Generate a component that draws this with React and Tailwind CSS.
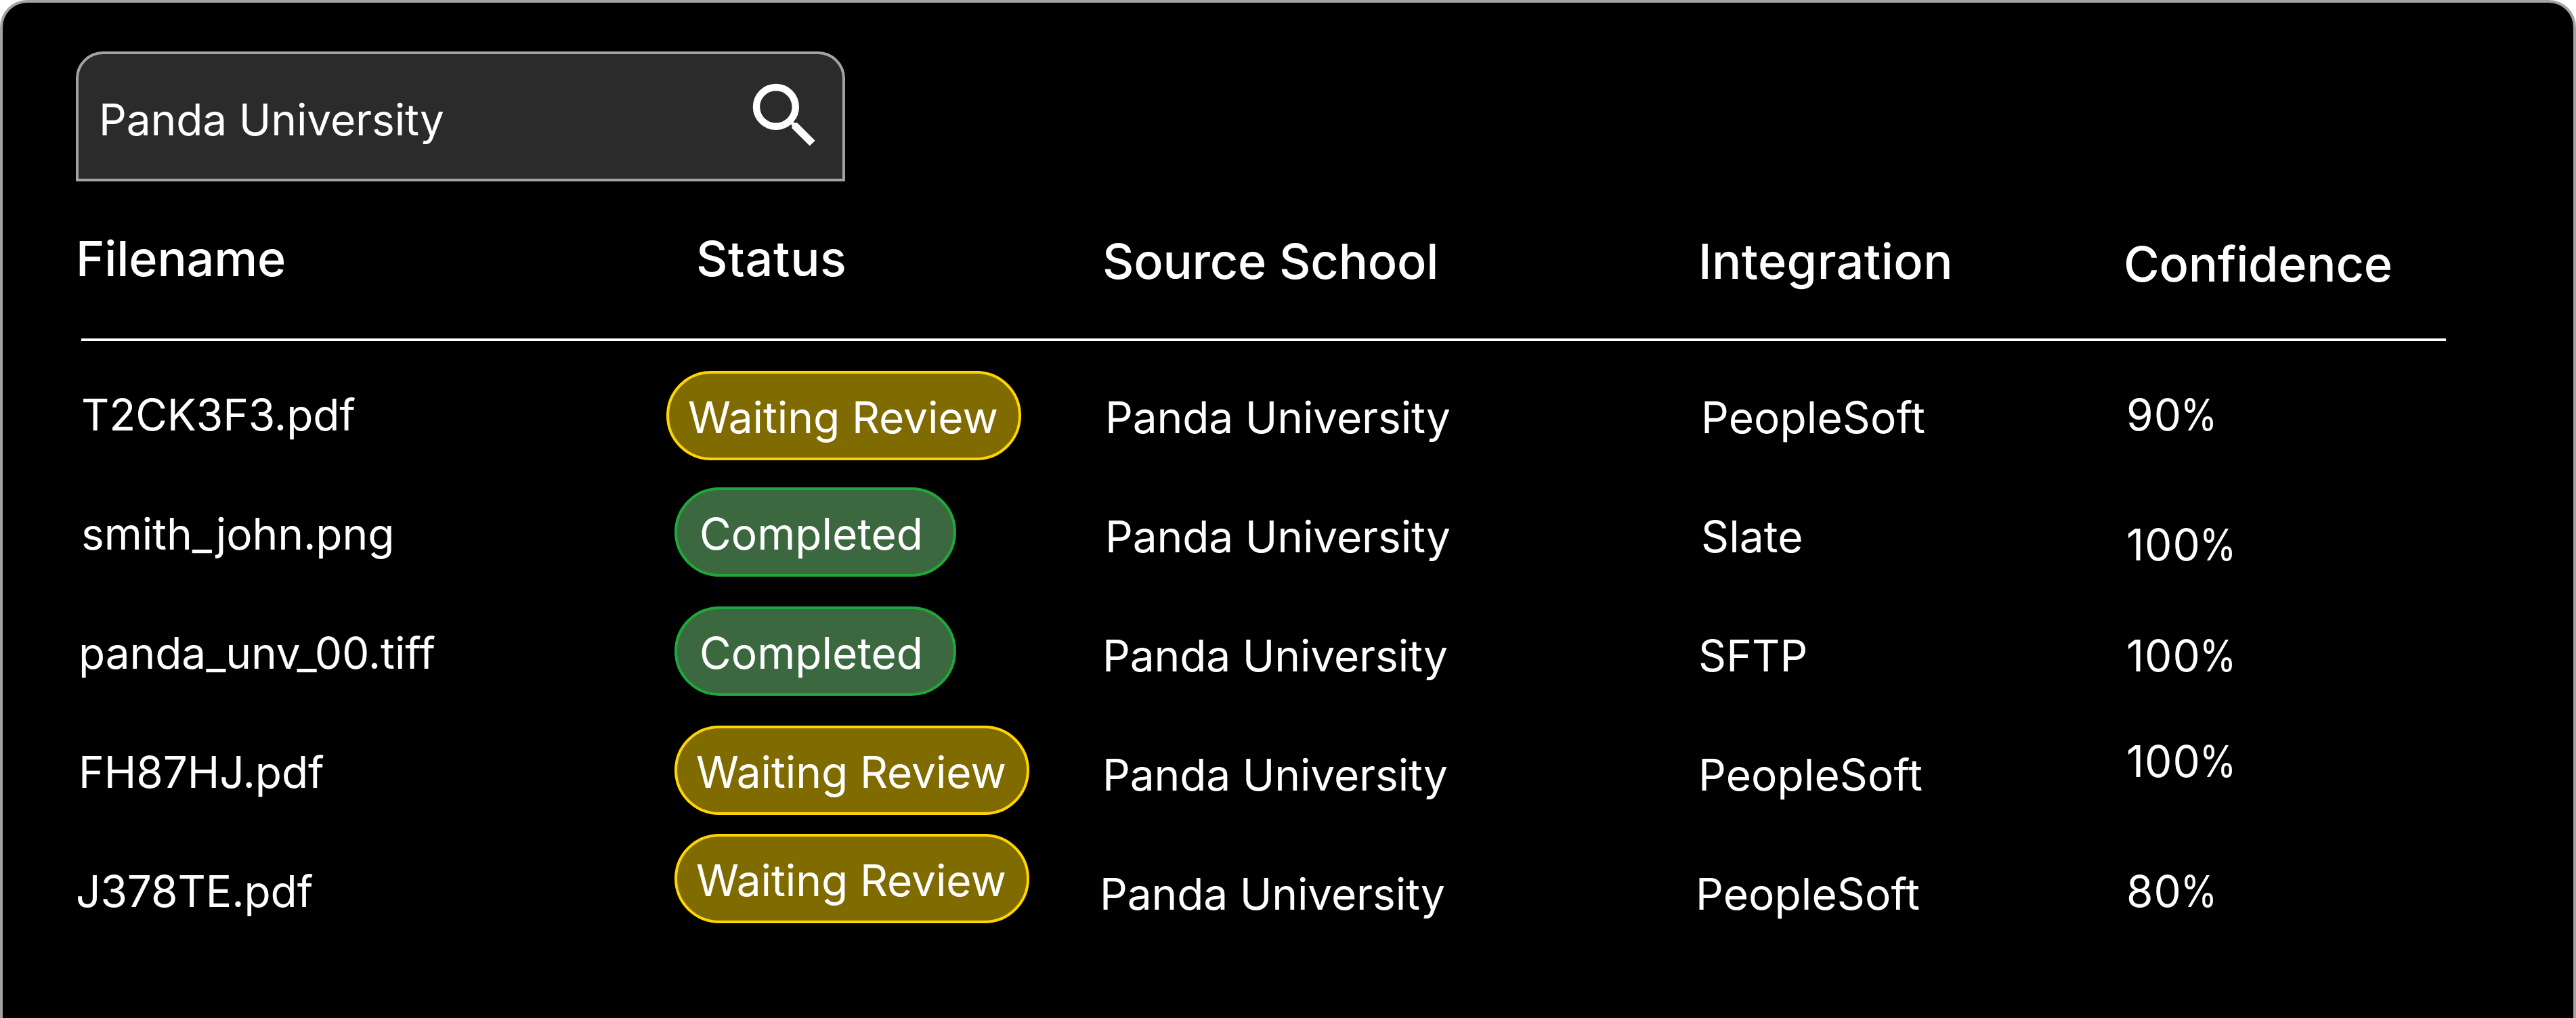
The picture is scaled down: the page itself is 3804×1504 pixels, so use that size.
import React from 'react';
import { MdSearch } from 'react-icons/md';

const columns = [
    { label: 'Filename', cell: 'w-[916px] tracking-[-0.15px]' },
    { label: 'Status', cell: 'w-[600px] tracking-[0.6px]' },
    { label: 'Source School', cell: 'w-[880px] pt-1 tracking-[-0.25px]' },
    { label: 'Integration', cell: 'w-[628px] pt-1 tracking-[0.4px]' },
    { label: 'Confidence', cell: 'w-[500px] pt-2 tracking-[-0.25px]' },
];

// indent, badge and score hold the small offsets of each row's cells
const rows = [
    {
        file: 'T2CK3F3.pdf', status: 'waiting', school: 'Panda University', integration: 'PeopleSoft', confidence: 90,
        indent: 'pl-2', badge: 'ml-[-52px] mt-[-4px]', score: 'pl-0',
    },
    {
        file: 'smith_john.png', status: 'completed', school: 'Panda University', integration: 'Slate', confidence: 100,
        indent: 'pl-2', badge: 'ml-[-40px] mt-[-8px]', score: 'pl-0 pt-4',
    },
    {
        file: 'panda_unv_00.tiff', status: 'completed', school: 'Panda University', integration: 'SFTP', confidence: 100,
        indent: 'pl-1', badge: 'ml-[-36px] mt-[-8px]', score: 'pl-1 pt-1',
    },
    {
        file: 'FH87HJ.pdf', status: 'waiting', school: 'Panda University', integration: 'PeopleSoft', confidence: 100,
        indent: 'pl-1', badge: 'ml-[-36px] mt-[-8px]', score: 'pl-1 mt-[-16px]',
    },
    {
        file: 'J378TE.pdf', status: 'waiting', school: 'Panda University', integration: 'PeopleSoft', confidence: 80,
        indent: 'pl-0', badge: 'ml-[-32px] mt-[-24px]', score: 'pl-2',
    },
];

const App = () => {
    return (
        <div className="bg-white">
            <main className="h-[1504px] w-full overflow-hidden rounded-t-[40px] border-4 border-b-0 border-[#a3a3a3] bg-black pl-[108px] pt-[72px] font-['Inter',sans-serif] text-white">
                <SearchBox value="Panda University" />

                {/* Table header */}
                <div className="flex h-[232px] pt-[70px] text-[72px] leading-[88px] font-medium">
                    {columns.map(({ label, cell }) => (
                        <div key={label} className={`shrink-0 whitespace-nowrap ${cell}`}>
                            {label}
                        </div>
                    ))}
                </div>
                <div className="ml-2 h-1 w-[3492px] bg-white" />

                {/* Table rows */}
                <div className="pt-[48px] text-[64px] leading-[80px]">
                    {rows.map((row) => (
                        <Row key={row.file} {...row} />
                    ))}
                </div>
            </main>
        </div>
    );
};

const SearchBox = ({ value }) => (
    <div className="flex h-[192px] w-[1136px] justify-between rounded-t-[40px] border-4 border-[#a3a3a3] bg-[#2b2b2b] pl-[30px] pr-[22px]">
        <span className="pt-[57px] text-[64px] leading-[80px] tracking-[-0.15px]">{value}</span>
        <MdSearch className="mt-[28px] h-[126px] w-[126px]" />
    </div>
);

const Row = ({ file, status, school, integration, confidence, indent, badge, score }) => (
    <div className={`flex h-[176px] whitespace-nowrap ${indent}`}>
        <div className="w-[916px] shrink-0 pt-[21px] tracking-[-0.1px]">{file}</div>
        <div className="w-[596px] shrink-0">
            <StatusBadge status={status} className={badge} />
        </div>
        <div className="w-[880px] shrink-0 pt-[25px] tracking-[-0.15px]">{school}</div>
        <div className="w-[628px] shrink-0 pt-[25px] tracking-[0.1px]">{integration}</div>
        <div className="pt-[21px]">
            <div className={`tracking-[1px] ${score}`}>
                {confidence}
                <span className="ml-[-2px] inline-block origin-left scale-x-[0.86]">%</span>
            </div>
        </div>
    </div>
);

const StatusBadge = ({ status, className }) => {
    const styles = {
        waiting: 'w-[524px] pl-[28px] tracking-[-0.1px] border-[#ffd500] bg-[#806b00]',
        completed: 'w-[416px] pl-[33px] border-[#1ea83c] bg-[#3c6840]',
    };
    const labels = { waiting: 'Waiting Review', completed: 'Completed' };

    return (
        <div className={`h-[132px] rounded-full border-4 pt-[25px] ${styles[status]} ${className}`}>
            {labels[status]}
        </div>
    );
};

export default App;
